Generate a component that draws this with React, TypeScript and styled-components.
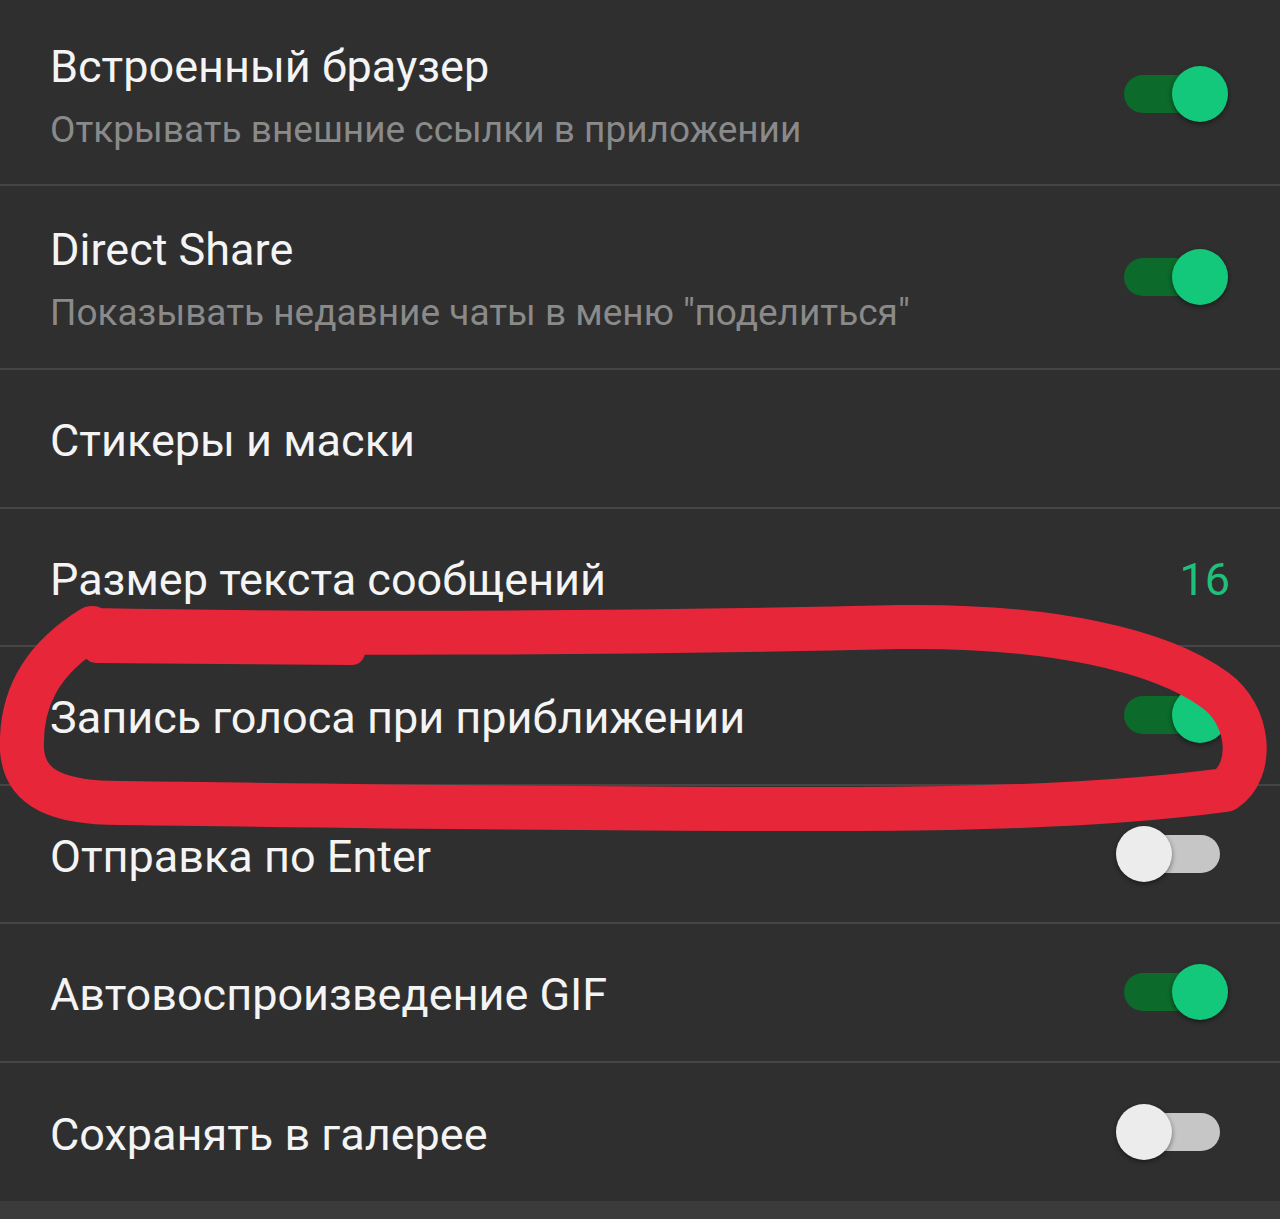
import React from "react";
import styled, {createGlobalStyle} from "styled-components";

const GlobalStyle = createGlobalStyle`
  html, body {
    margin: 0;
    padding: 0;
    background: #2f2f2f;
  }
  body {
    font-family: Roboto, "Noto Sans", sans-serif;
  }
`;

type Item = {
  title: string;
  summary?: string;
  toggle?: boolean;
  value?: string;
};

const items: Item[] = [
  {title: "Встроенный браузер", summary: "Открывать внешние ссылки в приложении", toggle: true},
  {title: "Direct Share", summary: "Показывать недавние чаты в меню \"поделиться\"", toggle: true},
  {title: "Стикеры и маски"},
  {title: "Размер текста сообщений", value: "16"},
  {title: "Запись голоса при приближении", toggle: true},
  {title: "Отправка по Enter", toggle: false},
  {title: "Автовоспроизведение GIF", toggle: true},
  {title: "Сохранять в галерее", toggle: false},
];

const App = () => {
  return (
    <>
      <GlobalStyle />
      <Page>
        <List>
          {items.map((item, i) => (
            <Row key={i} $tall={!!item.summary} $first={i === 0} $last={i === items.length - 1}>
              <TextBlock>
                <Title>{item.title}</Title>
                {item.summary && <Summary>{item.summary}</Summary>}
              </TextBlock>
              {item.value && <Value>{item.value}</Value>}
              {item.toggle !== undefined && (
                <Switch $on={item.toggle}>
                  <Thumb $on={item.toggle} />
                </Switch>
              )}
            </Row>
          ))}
        </List>
        <Shade />
        {/* hand-drawn marker around the proximity row */}
        <Scribble viewBox="0 0 1280 1219" width="1280" height="1219">
          <path
            d="M 92 630 C 300 634, 600 634, 900 627 C 1050 625, 1160 650, 1215 690 C 1250 715, 1255 770, 1225 790 C 1150 800, 1050 806, 950 808 C 700 812, 300 805, 120 803 C 60 803, 25 790, 22 750 C 20 700, 40 660, 92 628"
            fill="none"
            stroke="#e8263a"
            strokeWidth="44"
            strokeLinecap="round"
            strokeLinejoin="round"
          />
          <path
            d="M 96 650 L 352 652"
            fill="none"
            stroke="#e8263a"
            strokeWidth="26"
            strokeLinecap="round"
          />
        </Scribble>
      </Page>
    </>
  );
};

const Page = styled.div`
  position: relative;
  width: 1280px;
  height: 1219px;
  overflow: hidden;
  background: #2f2f2f;
`;

const List = styled.div`
  display: flex;
  flex-direction: column;
`;

const Row = styled.div<{$tall: boolean; $first: boolean; $last: boolean}>`
  box-sizing: border-box;
  height: ${(p) => (p.$first ? "186px" : p.$tall ? "184px" : "138.5px")};
  padding: ${(p) => (p.$first ? "4px" : "0")} 50px 0 50px;
  display: flex;
  align-items: center;
  justify-content: space-between;
  border-bottom: ${(p) => (p.$last ? "none" : "2px solid #454545")};
`;

const TextBlock = styled.div`
  display: flex;
  flex-direction: column;
  padding-top: 6px;
`;

const Title = styled.div`
  font-size: 45px;
  line-height: 52px;
  color: #f4f4f4;
`;

const Summary = styled.div`
  font-size: 37px;
  line-height: 46px;
  margin-top: 14px;
  color: #8a8a8a;
`;

const Value = styled.div`
  font-size: 45px;
  line-height: 52px;
  padding-top: 6px;
  color: #1fc07b;
`;

const Switch = styled.div<{$on: boolean}>`
  position: relative;
  width: 112px;
  height: 56px;
  margin-right: 2px;
  display: flex;
  align-items: center;
  justify-content: ${(p) => (p.$on ? "flex-end" : "flex-start")};
  &::before {
    content: "";
    position: absolute;
    left: 8px;
    right: 8px;
    top: 9px;
    height: 38px;
    border-radius: 19px;
    background: ${(p) => (p.$on ? "#0c6a2b" : "#c6c6c6")};
  }
`;

const Thumb = styled.span<{$on: boolean}>`
  position: relative;
  width: 56px;
  height: 56px;
  border-radius: 50%;
  background: ${(p) => (p.$on ? "#13c87a" : "#ececec")};
  box-shadow: 0 2px 5px rgba(0, 0, 0, 0.45);
`;

const Shade = styled.div`
  height: 19px;
  background: #3b3b3b;
`;

const Scribble = styled.svg`
  position: absolute;
  left: 0;
  top: 0;
  pointer-events: none;
`;

export default App;
